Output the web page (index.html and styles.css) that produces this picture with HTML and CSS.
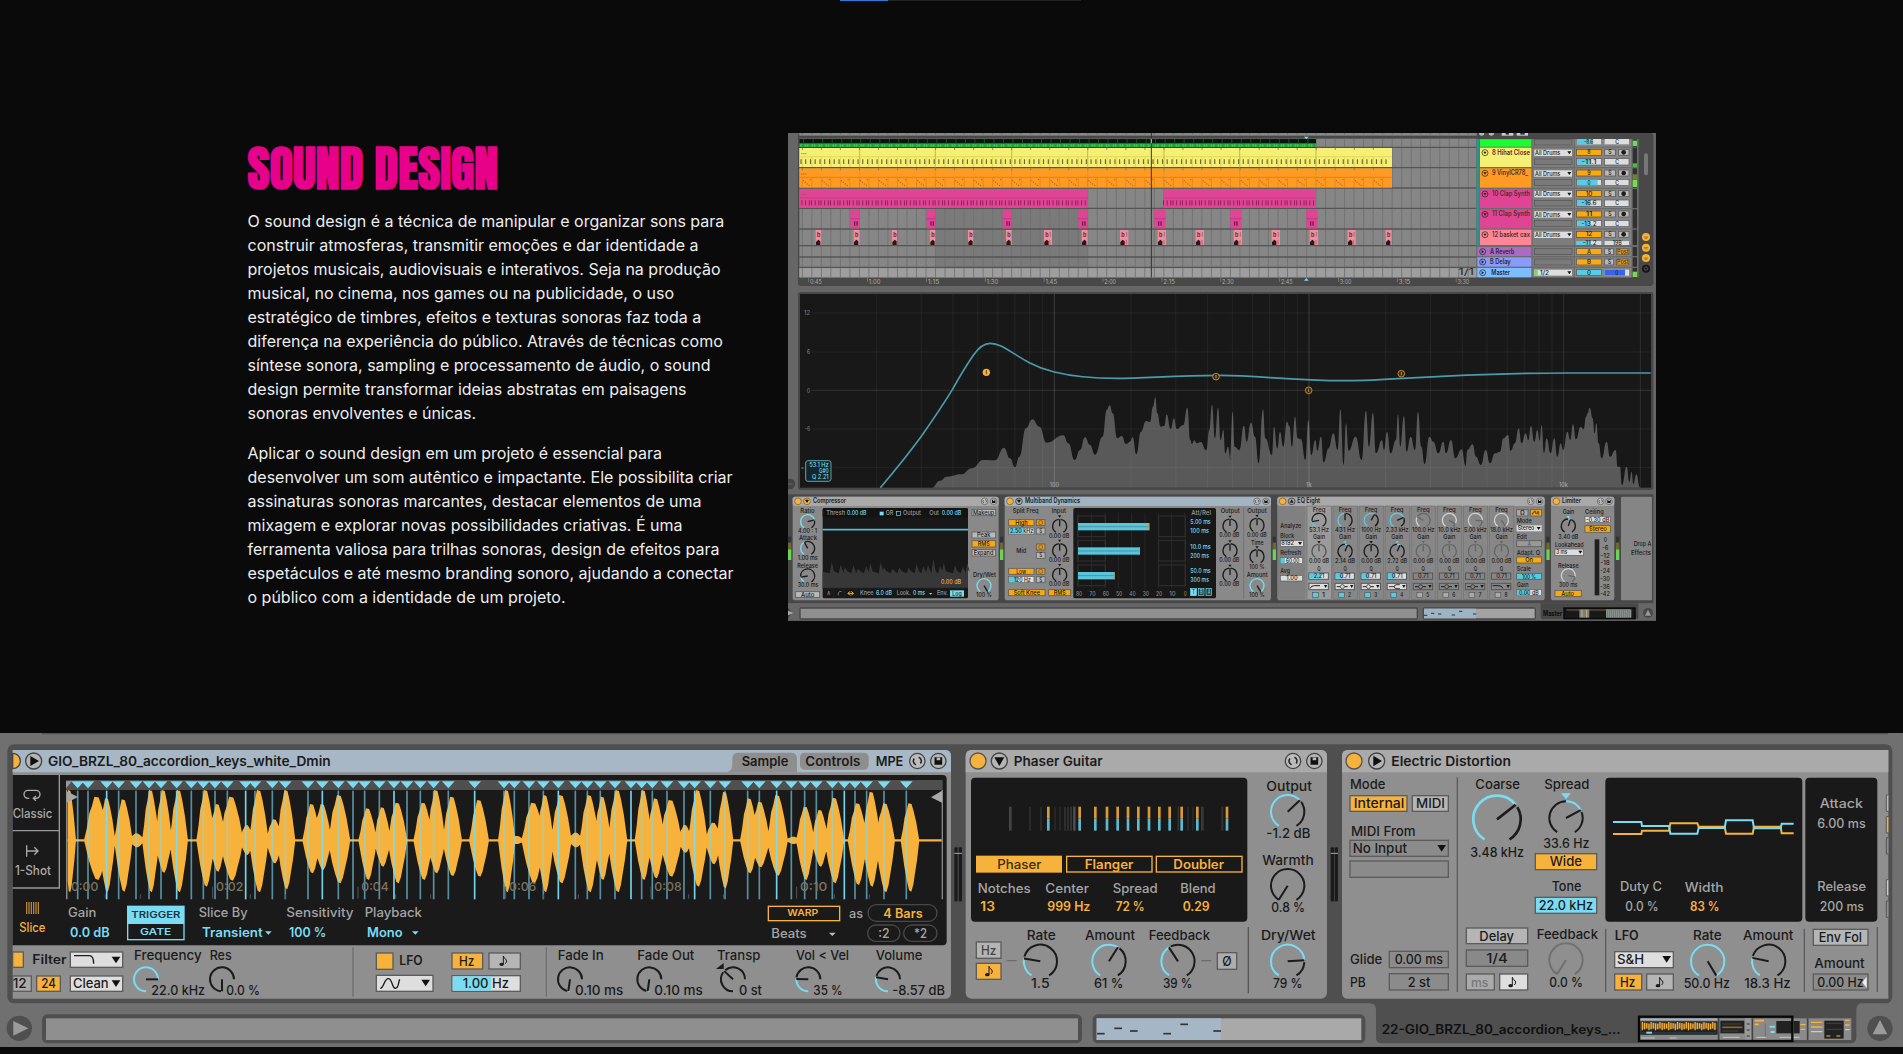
FILE: index.html
```html
<!DOCTYPE html>
<html lang="pt-BR">
<head>
<meta charset="utf-8">
<title>Sound Design</title>
<link rel="stylesheet" href="styles.css">
</head>
<body>
<div class="progress"><div class="progress-value"></div></div>
<main>
  <section class="intro">
    <div class="copy">
      <h2>SOUND DESIGN</h2>
      <p>O sound design é a técnica de manipular e organizar sons para construir atmosferas, transmitir emoções e dar identidade a projetos musicais, audiovisuais e interativos. Seja na produção musical, no cinema, nos games ou na publicidade, o uso estratégico de timbres, efeitos e texturas sonoras faz toda a diferença na experiência do público. Através de técnicas como síntese sonora, sampling e processamento de áudio, o sound design permite transformar ideias abstratas em paisagens sonoras envolventes e únicas.</p>
      <p>Aplicar o sound design em um projeto é essencial para desenvolver um som autêntico e impactante. Ele possibilita criar assinaturas sonoras marcantes, destacar elementos de uma mixagem e explorar novas possibilidades criativas. É uma ferramenta valiosa para trilhas sonoras, design de efeitos para espetáculos e até mesmo branding sonoro, ajudando a conectar o público com a identidade de um projeto.</p>
    </div>
    <svg class="session" id="session" viewBox="788 133 868 488" role="img"></svg>
  </section>
  <svg class="rack" id="rack" viewBox="0 733 1903 314" role="img"></svg>
</main>
<script src="script.js"></script>
</body>
</html>
```
FILE: styles.css
```css
* { box-sizing: border-box; }
body {
  margin: 0;
  background: #0a0a0a;
  color: #ededed;
  font-family: Inter, "Liberation Sans", sans-serif;
  font-size: 16px;
  line-height: 24px;
  overflow: hidden;
}
.progress {
  width: 241px;
  height: 1px;
  margin-left: 840px;
  background: #222;
}
.progress-value { width: 48px; height: 1px; background: #2f7bd9; }
.intro {
  display: grid;
  grid-template-columns: 492.5px 868px;
  gap: 48px;
  align-items: center;
  width: 1408.5px;
  margin: 20px 0 0 247.5px;
  padding: 112px 0;
}
.copy { display: flex; flex-direction: column; gap: 16px; }
.copy p { margin: 0; }
.copy h2 {
  margin: 0;
  font-family: Anton, Impact, sans-serif;
  font-size: 48px;
  font-weight: 700;
  line-height: 48px;
  color: #e6008a;
  white-space: nowrap;
}
.session { display: block; width: 868px; height: 488px; }
.rack { display: block; width: 1903px; height: 314px; }
svg text { font-family: Inter, "Liberation Sans", sans-serif; }
```
FILE: script.js
```js
const N = '#1b1b1b', CY = '#7adcf3', OR = '#f7b23b', GR = '#8f8f8f', BD = '#5c5c5c';
let out = '';
const esc = s => s.replace(/&/g, '&amp;').replace(/</g, '&lt;');
const add = s => { out += s; };

/* Panels are drawn in third-of-a-pixel units from a local origin. */
const at = (x, y, fn) => { add(`<g transform="translate(${x} ${y}) scale(.33333)">`); fn(); add('</g>'); };
const R = (x, y, x2, y2, f, r = 0, st, sw = 4) =>
  add(`<rect x="${x}" y="${y}" width="${x2 - x}" height="${y2 - y}" rx="${r}" fill="${f}"${st ? ` stroke="${st}" stroke-width="${sw}"` : ''}/>`);
const T = (x, x2, y, s, size = 39, f = N, w = 500) =>
  add(`<text x="${x}" y="${y}" textLength="${x2 - x}" lengthAdjust="spacingAndGlyphs" font-size="${size}" fill="${f}" font-weight="${w}">${esc(s)}</text>`);
const P = (d, f = 'none', st, sw = 4, o = 1) =>
  add(`<path d="${d}" fill="${f}"${st ? ` stroke="${st}" stroke-width="${sw}"` : ''} opacity="${o}"/>`);
const C = (x, y, r, f, st, sw = 4) =>
  add(`<circle cx="${x}" cy="${y}" r="${r}" fill="${f}"${st ? ` stroke="${st}" stroke-width="${sw}"` : ''}/>`);
const pt = (cx, cy, r, a) => [cx + r * Math.sin(a * Math.PI / 180), cy - r * Math.cos(a * Math.PI / 180)].map(v => v.toFixed(1)).join(' ');
const arc = (cx, cy, r, a, b, c, w) => {
  if (b - a > 1) P(`M${pt(cx, cy, r, a)}A${r} ${r} 0 ${b - a > 180 ? 1 : 0} 1 ${pt(cx, cy, r, b)}`, 'none', c, w);
};
function K(cx, cy, r, ang, o = {}) {
  const { s = -148, e = 148, z = s, dark = N, blue = CY, w = 6, g = 7 } = o;
  const lo = Math.min(z, ang), hi = Math.max(z, ang);
  arc(cx, cy, r, s, lo - (lo === ang ? g : 0), dark, w);
  arc(cx, cy, r, lo, hi, blue, w);
  arc(cx, cy, r, hi + (hi > s ? g : 0), e, dark, w);
  P(`M${cx} ${cy}L${pt(cx, cy, r, ang)}`, 'none', dark, w);
}
const down = (x, y, w = 13, h = 20, f = '#111') => P(`M${x - w} ${y}h${2 * w}l${-w} ${h}z`, f);
const note = (x, y, f = N) => {
  P(`M${x} ${y + 9}V${y - 15}q2 8 9 11q3 7 -3 12`, 'none', f, 3);
  add(`<ellipse cx="${x - 5}" cy="${y + 10}" rx="7" ry="5" fill="${f}"/>`);
};
const btn = (x, y, x2, y2, f, label, a, b, size = 39, col = N) => {
  R(x, y, x2, y2, f, 0, BD, size < 30 ? 2.5 : 4);
  if (label) T(a, b, (y + y2) / 2 + size * .36, label, size, col);
};
const swap = (x, y, r = 23) => {
  C(x, y, r, '#bcbcbc', '#444', r / 6);
  arc(x, y, r * .52, 20, 130, '#222', r / 5); arc(x, y, r * .52, 200, 310, '#222', r / 5);
};
const disk = (x, y, r = 23) => {
  C(x, y, r, '#b5b5b5', '#444', r / 6);
  R(x - r * .5, y - r * .5, x + r * .5, y + r * .5, '#111', 1);
  R(x - r * .22, y - r * .45, x + r * .25, y - r * .1, '#bbb');
};

/* ---------- Device rack ---------- */
at(0, 730, () => {
  R(0, 9, 5709, 951, '#707070');
  R(125, 9, 5664, 13, '#555');
  R(22, 43, 5677, 820, '#4f4f4f', 20);
  P('M4110 815H5590Q5569 820 5569 840V922Q5569 940 5550 940H4146Q4128 940 4128 922V838Q4128 820 4110 820z', '#4f4f4f');
  C(58, 895, 38, '#4f4f4f'); P('M40 873L85 895L40 917z', '#9b9b9b');
  C(5640, 895, 38, '#4f4f4f'); P('M5618 913L5640 870L5662 913z', '#9b9b9b');
  R(126, 853, 3246, 940, '#4f4f4f', 16); R(138, 865, 3234, 930, GR);
  R(3278, 853, 4096, 940, '#4f4f4f', 16); R(3290, 865, 4084, 930, '#a9a9a9'); R(3290, 865, 3663, 930, '#a5b7c6');
  [[3291, 911], [3343, 895], [3390, 903], [3490, 911], [3541, 883], [3640, 903]].forEach(([x, y]) => P(`M${x} ${y}h23`, 'none', '#333', 5));

  /* Simpler body */
  P('M38 60H2835Q2853 60 2853 78V788Q2853 806 2835 806H38z', GR);
  P('M38 60H2835Q2853 60 2853 78V127H38z', '#a7b7c5');
  P('M38 135H2828Q2840 135 2840 147V634Q2840 646 2828 646H38z', '#1a1a1a');
  P('M38 70A23 23 0 0 1 38 116z', OR, '#444', 4);
  C(101, 93, 24, '#b5b5b5', '#444'); P('M91 78L117 93L91 108z', '#111');
  T(144, 992, 107, 'GIO_BRZL_80_accordion_keys_white_Dmin', 39, N, 600);
  P('M38 302H178M38 474H178V135', 'none', '#999', 4);
  P('M88 205h-4a4 4 0 0 1 0 -24h24a10 10 0 0 1 0 24h-8m8 -7l-8 7l8 7', 'none', '#aaa', 4);
  P('M80 346v34M80 363h33m-10 -11l11 11l-11 11', 'none', '#aaa', 4);
  [80, 87, 94, 101, 108, 115].forEach(x => P(`M${x} 516V552`, 'none', OR, 3.5, .8));
  T(38, 157, 265, 'Classic', 38, '#aaa'); T(45, 153, 436, '1-Shot', 38, '#aaa'); T(58, 136, 606, 'Slice', 38, OR);
  R(198, 150, 2828, 180, '#4f4f4f');
  P('M200 180V508M2827 180V508', 'none', '#8a8a8a', 4);

  /* Waveform: [centre, top, bottom, half-width] */
  const w = [[208,180,487,20],[290,200,450,38],[320,205,485,26],[370,208,485,28],[410,310,352,24],[452,180,487,26],[490,180,428,26],[536,180,487,28],
    [617,180,470,28],[652,222,425,26],[694,200,452,36],[740,285,375,22],[776,180,487,30],[823,268,400,26],[858,180,478,28],[935,222,430,28],[967,222,420,28],
    [1017,195,460,34],[1103,235,450,28],[1147,232,410,26],[1192,218,460,30],[1270,218,450,30],[1308,180,430,28],[1356,200,438,30],[1437,210,440,30],
    [1520,180,487,26],[1550,318,342,24],[1600,218,460,36],[1635,195,487,26],[1683,195,460,32],[1727,308,352,24],[1768,195,487,30],[1807,200,450,26],[1852,180,487,30],
    [1930,180,450,26],[1967,205,445,28],[2012,210,440,34],[2055,285,368,22],[2093,180,470,30],[2140,278,403,26],[2174,185,475,26],[2248,205,430,28],[2280,215,412,30],
    [2332,195,437,32],[2380,320,342,24],[2416,230,450,28],[2460,240,410,26],[2503,203,460,30],[2573,220,465,30],[2614,185,470,28],[2655,220,487,30],[2730,220,485,28]];
  let d = '';
  w.forEach(([c, t, b, h]) => {
    const f = v => Math.max(203, c + h * v).toFixed(1), u = v => (331 - (331 - t) * v).toFixed(1), l = v => (331 + (b - 331) * v).toFixed(1);
    d += `M${f(-1)} 331L${f(-.76)} ${u(.3)}L${f(-.58)} ${u(.62)}L${f(-.38)} ${u(.78)}L${f(-.18)} ${u(1)}L${f(.16)} ${u(.98)}L${f(.38)} ${u(.8)}L${f(.66)} ${u(.5)}L${f(1)} 331`
      + `L${f(.76)} ${l(.38)}L${f(.52)} ${l(.66)}L${f(.36)} ${l(.86)}L${f(.14)} ${l(1)}L${f(-.1)} ${l(.97)}L${f(-.34)} ${l(.78)}L${f(-.6)} ${l(.52)}z`;
  });
  P(d, OR); P('M203 331H2825', 'none', OR, 7);
  const m = [233,264,320,356,408,447,483,530,574,610,645,682,737,765,817,856,924,967,1015,1059,1094,1138,1182,1221,1261,1301,1345,1424,
    1512,1543,1587,1630,1675,1726,1762,1801,1845,1893,1925,1957,2001,2052,2084,2131,2175,2243,2278,2330,2374,2414,2449,2497,2533,2565,2600,2652,2719];
  m.forEach((x, i) => { P(`M${x} 182V508`, 'none', CY, 5, i % 5 === 2 ? .95 : .62); P(`M${x - 19} 154h38l-10 11l-9 10l-9 -10z`, CY); });
  P('M200 184L234 201L200 218z', '#a6a6a6'); P('M198 175V154h18z', '#999'); P('M2826 182L2793 202L2826 218z', '#aaa');
  [213, 648, 1084, 1527, 1963, 2400].forEach((x, i) => {
    T(x, x + 82, 484, '0:' + String(i * 2).padStart(2, '0'), 36, '#7a7465');
    P(`M${x - 10} 470V506M${x + 103} 493V506M${x + 208} 493V506`, 'none', '#555', 3);
  });

  T(204, 289, 560, 'Gain', 38, '#a5a5a5'); T(210, 329, 620, '0.0 dB', 38, CY, 600);
  R(383, 529, 552, 629, '#1a1a1a', 0, CY, 4); R(383, 529, 552, 582, CY);
  T(394, 541, 563, 'TRIGGER', 27, '#173640', 600); T(420, 514, 614, 'GATE', 27, CY, 600);
  T(596, 743, 560, 'Slice By', 38, '#a5a5a5'); T(606, 788, 620, 'Transient', 38, CY, 600); down(805, 604, 10, 10, CY);
  T(859, 1061, 560, 'Sensitivity', 38, '#a5a5a5'); T(867, 979, 620, '100 %', 38, CY, 600);
  T(1094, 1266, 560, 'Playback', 38, '#a5a5a5'); T(1101, 1208, 620, 'Mono', 38, CY, 600); down(1246, 604, 10, 10, CY);

  R(38, 666, 70, 712, OR, 0, BD); T(97, 200, 703, 'Filter', 38, N, 600);
  btn(211, 666, 368, 712, '#dedede'); P('M222 677H268Q281 677 281 701', 'none', N, 4); down(348, 680);
  btn(38, 738, 94, 784, '#aaa', '12', 38, 80); btn(110, 738, 181, 784, OR, '24', 124, 168);
  btn(211, 738, 368, 784, '#dedede', 'Clean', 219, 326); down(348, 751);
  T(402, 605, 691, 'Frequency'); T(629, 695, 691, 'Res'); T(454, 615, 795, '22.0 kHz'); T(679, 780, 795, '0.0 %');
  K(438, 748, 36, 90, { s: -180, e: 90 }); K(666, 748, 36, -180, { s: -175, e: 90 });
  P('M1059 652V800M1639 652V800', 'none', '#707070', 4);
  R(1129, 669, 1179, 718, OR, 0, BD); T(1198, 1268, 706, 'LFO', 38, N, 600);
  btn(1129, 736, 1299, 784, '#dedede'); P('M1141 775C1152 775 1152 746 1165 746S1175 775 1186 775S1195 755 1199 748', 'none', N, 4); down(1277, 749);
  btn(1356, 669, 1448, 717, OR, 'Hz', 1377, 1423);
  btn(1467, 669, 1561, 717, '#b5b5b5'); note(1510, 693);
  R(1356, 737, 1561, 784, '#dedede', 0, BD); R(1358, 739, 1474, 782, CY); T(1388, 1527, 774, '1.00 Hz');
});
at(480, 730, () => {
  P('M740 127Q757 122 757 105V86Q757 68 775 68H933Q951 68 951 86V127z', '#8e8e8e'); R(960, 68, 1166, 119, '#8e8e8e', 14);
  T(785, 925, 107, 'Sample', 39, N, 600); T(976, 1141, 107, 'Controls', 39, N, 600); T(1187, 1270, 107, 'MPE', 39, N, 600);
  swap(1312, 93); disk(1375, 93);
  R(865, 529, 1079, 572, 'none', 0, OR, 4); T(922, 1015, 559, 'WARP', 26, OR, 600);
  T(1107, 1149, 563, 'as', 38, '#a5a5a5'); R(1164, 524, 1371, 574, '#1a1a1a', 25, '#484848'); T(1210, 1328, 563, '4 Bars', 38, OR, 600);
  T(874, 980, 623, 'Beats', 38, '#a5a5a5'); down(1057, 608, 10, 10, '#bbb');
  R(1163, 585, 1260, 634, '#1a1a1a', 25, '#484848'); R(1271, 585, 1371, 634, '#1a1a1a', 25, '#484848');
  T(1195, 1229, 623, ':2', 38, '#aaa'); T(1302, 1341, 623, '*2', 38, '#aaa');
  [['Fade In', 233, 371, '0.10 ms', 285, 430, 270, -172], ['Fade Out', 472, 643, '0.10 ms', 523, 668, 508, -172], ['Transp', 711, 841, '0 st', 777, 846, 759, -47],
   ['Vol < Vel', 948, 1107, '35 %', 1000, 1088, 985, -88], ['Volume', 1187, 1327, '-8.57 dB', 1237, 1395, 1224, -80]].forEach(([l, a, b, v, c, e, x, g], i) => {
    T(a, b, 691, l); T(c, e, 795, v); K(x, 748, 36, g, { s: -180, e: 90, z: i === 2 ? -47 : -180 });
  });
  P('M708 717L731 699V717z', N);
});
at(950, 730, () => {
  /* Level meters between devices */
  [[13, 36], [1142, 1164]].forEach(([a, b]) => {
    R(a, 352, a + 10, 514, N); R(b - 10, 352, b, 514, N); P(`M${a} 370H${b}`, 'none', '#aaa', 3);
  });
  R(47, 60, 1131, 806, GR, 18); P('M47 127V78Q47 60 65 60H1113Q1131 60 1131 78V127z', '#aaa');
  C(84, 93, 24, OR, '#555'); C(148, 93, 24, '#b5b5b5', '#444'); down(148, 82, 15, 26);
  T(191, 458, 107, 'Phaser Guitar', 39, N, 600); swap(1029, 93); disk(1093, 93);
  R(63, 143, 892, 575, '#191919', 12);
  [[181, '#444', 8], [240, '#333', 4], [273, '#333', 4], [315, '#2d2d2d', 4], [330, '#2d2d2d', 4], [345, '#333', 5], [354, '#333', 5], [363, '#393939', 5], [373, '#505050', 7],
   [685, '#333', 5], [714, '#333', 4], [729, '#2d2d2d', 4], [757, '#383838', 8], [817, '#333', 6]].forEach(([x, c, s]) => P(`M${x} 230V302`, 'none', c, s));
  [295, 389, 436, 471, 503, 534, 565, 597, 628, 659, 695, 742, 831].forEach(x => { P(`M${x} 230V266`, 'none', '#dc9b32', 8); P(`M${x} 266V302`, 'none', '#60b9cf', 8); });
  R(78, 377, 336, 428, OR); T(142, 274, 417, 'Phaser', 38, '#3c2c10');
  R(350, 379, 606, 426, 'none', 0, OR, 4); T(404, 550, 417, 'Flanger', 38, OR, 600);
  R(619, 379, 876, 426, 'none', 0, OR, 4); T(670, 822, 417, 'Doubler', 38, OR, 600);
  [['Notches', 83, 242, '13', 91, 135], ['Center', 286, 417, '999 Hz', 292, 421], ['Spread', 488, 623, '72 %', 497, 584], ['Blend', 691, 797, '0.29', 698, 779]].forEach(([l, a, b, v, c, e]) => {
    T(a, b, 488, l, 38, '#a5a5a5'); T(c, e, 543, v, 38, OR, 600);
  });
  T(949, 1086, 182, 'Output'); K(1013, 245, 50, 47); T(949, 1081, 325, '-1.2 dB');
  T(937, 1091, 405, 'Warmth'); K(1013, 467, 50, -148); T(964, 1065, 547, '0.8 %');
  T(933, 1097, 631, 'Dry/Wet'); K(1013, 694, 50, 86); T(969, 1057, 774, '79 %');
  T(230, 317, 631, 'Rate'); K(271, 694, 50, -80); T(243, 299, 774, '1.5');
  T(405, 555, 631, 'Amount'); K(477, 694, 50, 32); T(432, 520, 774, '61 %');
  T(596, 780, 631, 'Feedback'); K(684, 694, 50, -33); T(639, 727, 774, '39 %');
  P('M895 591V790', 'none', '#555', 4); P('M170 692h30M754 692h30', 'none', '#6c6c6c', 4);
  btn(79, 636, 153, 685, '#b5b5b5', 'Hz', 93, 139, 38, '#444'); btn(79, 700, 153, 748, OR); note(117, 724);
  btn(802, 668, 860, 718, '#aeaeae', 'Ø', 817, 845);
  /* Wavetable distortion, left part */
  P('M1176 806V78Q1176 60 1194 60H2815V806H1194Q1176 806 1176 788z', GR);
  P('M1176 127V78Q1176 60 1194 60H2815V127z', '#aaa');
  C(1212, 93, 24, OR, '#555'); C(1280, 93, 24, '#b5b5b5', '#444'); P('M1270 77L1296 93L1270 109z', '#111');
  T(1324, 1683, 107, 'Electric Distortion', 39, N, 600);
  T(1200, 1306, 178, 'Mode'); btn(1200, 197, 1371, 244, OR, 'Internal', 1211, 1363);
  btn(1387, 197, 1495, 244, '#b5b5b5', 'MIDI', 1398, 1485);
  T(1203, 1397, 317, 'MIDI From'); btn(1200, 331, 1495, 379, '#8b8b8b', 'No Input', 1208, 1371); down(1475, 345);
  btn(1200, 393, 1495, 442, '#8b8b8b');
  T(1200, 1297, 703, 'Glide'); btn(1318, 664, 1495, 713, '#8b8b8b', '0.00 ms', 1334, 1479);
  T(1200, 1247, 770, 'PB'); btn(1318, 731, 1495, 780, '#8b8b8b', '2 st', 1373, 1441);
  T(1295, 2012, 912, '22-GIO_BRZL_80_accordion_keys_...', 38, '#111', 600);
});
at(1423, 730, () => {
  P('M103 142V786M548 596V786M1144 596V786M1363 591V786', 'none', '#5c5c5c', 4);
  T(157, 291, 178, 'Coarse'); K(222, 268, 71, 52, { w: 8 }); T(142, 303, 381, '3.48 kHz');
  T(364, 499, 178, 'Spread'); K(429, 264, 50, 62, { z: 0 }); down(429, 190, 15, 17, CY); T(361, 499, 353, '33.6 Hz');
  btn(337, 371, 521, 419, OR, 'Wide', 380, 477); T(386, 475, 484, 'Tone'); btn(337, 502, 521, 550, CY, '22.0 kHz', 347, 510);
  btn(130, 594, 314, 641, '#b5b5b5', 'Delay', 169, 273); btn(130, 660, 314, 709, '#898989', '1/4', 190, 254);
  btn(130, 732, 214, 780, '#aaa', 'ms', 144, 196, 38, '#777'); btn(230, 732, 314, 780, '#dedede'); note(268, 757);
  T(341, 525, 627, 'Feedback'); K(429, 690, 50, -148, { dark: '#707070' }); T(379, 480, 770, '0.0 %');
  R(547, 143, 1138, 575, '#191919', 12); R(1147, 143, 1363, 575, '#191919', 12);
  P('M570 312H655L657 302H738L742 280H823L827 290H905L909 311H989L993 290H1073L1076 310H1112', 'none', OR, 6);
  P('M570 276H655L657 288H738L742 311H823L827 294H905L909 271H989L993 295H1073L1076 281H1112', 'none', CY, 6);
  T(591, 717, 484, 'Duty C', 38, '#a5a5a5'); T(607, 707, 543, '0.0 %', 38, '#a5a5a5');
  T(785, 902, 487, 'Width', 38, '#a5a5a5'); T(801, 889, 543, '83 %', 38, OR, 600);
  T(1190, 1320, 233, 'Attack', 38, '#a5a5a5'); T(1183, 1328, 293, '6.00 ms', 38, '#a5a5a5');
  T(1183, 1329, 484, 'Release', 38, '#a5a5a5'); T(1190, 1323, 543, '200 ms', 38, '#a5a5a5');
  T(575, 647, 630, 'LFO', 38, N, 600); btn(575, 665, 751, 713, '#dedede', 'S&H', 582, 663); down(731, 678);
  btn(575, 732, 656, 780, OR, 'Hz', 591, 637); btn(671, 732, 751, 780, '#b5b5b5'); note(710, 757);
  T(810, 896, 631, 'Rate'); K(854, 694, 50, 149, { e: 149 }); T(782, 921, 774, '50.0 Hz');
  T(960, 1111, 631, 'Amount'); K(1037, 694, 50, -78); T(964, 1103, 774, '18.3 Hz');
  btn(1171, 598, 1335, 646, '#b5b5b5', 'Env Fol', 1187, 1317); T(1174, 1325, 714, 'Amount');
  btn(1171, 732, 1335, 780, '#8b8b8b', '0.00 Hz', 1183, 1322); P('M1331 740V774L1318 757z', '#eee');
  [[195, '#bbb'], [260, OR], [323, GR], [449, '#ccc'], [513, GR]].forEach(([y, c]) => { R(1389, y, 1396, y + 48, c); P(`M1396 ${y}H1390V${y + 49}H1396`, 'none', '#555', 3); });
  /* Chain overview */
  R(645, 865, 1285, 930, '#8a8a8a');
  R(652, 874, 884, 914, '#222'); P('M656 888H880', 'none', OR, 19, .35);
  for (let i = 0; i < 34; i++) P(`M${658 + i * 6.6} ${876 + i % 4 * 2}V${901 - i % 3 * 3}`, 'none', OR, 3.5);
  P('M652 910h228', 'none', '#28343a', 8); P('M670 908h17', 'none', CY, 6); P('M652 868h230', 'none', '#9db7c9', 5);
  R(892, 872, 964, 910, '#222'); P('M898 892h60', 'none', '#8e682b', 5); P('M898 882h56M898 903h48', 'none', '#444', 3);
  R(966, 865, 990, 930, '#999'); P('M971 882h9M971 900h9M971 918h9', 'none', '#555', 4);
  P('M995 872h28M995 883h12', 'none', OR, 5); P('M1040 890h16M1043 906h12', 'none', CY, 6); P('M1027 880v46', 'none', '#666', 2);
  R(1060, 873, 1110, 910, '#222'); R(1112, 873, 1130, 910, '#222'); P('M1132 884h16M1132 898h14', 'none', OR, 4);
  R(1204, 872, 1262, 926, '#222'); P('M1210 880h46M1210 898h46', 'none', '#444', 3); P('M1210 918h12M1240 918h12', 'none', OR, 3);
  [877, 891, 905].forEach(y => P(`M1164 ${y}h34M1266 ${y - 6}h14`, 'none', y < 900 ? OR : '#ccc', 4));
  P('M988 865v65M1154 865v65M887 865v65', 'none', '#444', 5);
  P('M655 924h40M740 924h20M900 922h50M1000 922h30M1070 922h60', 'none', '#c5c5c5', 3);
  R(648, 860, 1108, 933, 'none', 0, '#080808', 7);
});
document.getElementById('rack').innerHTML = out;

/* ---------- Session view ---------- */
out = '';
at(780, 120, () => {
  R(24, 39, 2628, 1502, '#666');
  R(54, 39, 2620, 498, '#484848', 10);
  R(58, 56, 2090, 472, '#868686'); R(58, 39, 2090, 47, '#868686');
  R(466, 204, 923, 472, '#7a7a7a'); R(58, 445, 2090, 472, '#9e9e9e');
  for (let x = 67; x < 2090; x += 28.54) P(`M${x} 39V47M${x} 56V472`, 'none', '#707070', 2.5);
  [82, 143, 204, 265, 327, 377, 411, 442].forEach(y => P(`M58 ${y}H2090`, 'none', '#555', 4));
  R(58, 57, 1608, 82, '#08190c'); R(58, 70, 1608, 81, '#2fa947');
  for (let x = 62; x < 1606; x += 7) P(`M${x} 73V80`, 'none', x % 3 ? '#46cf5e' : '#1f8a37', 2.5);
  for (let x = 71; x < 1606; x += 28.54) P(`M${x} 57V71`, 'none', '#1c5a29', 2.5);
  R(58, 84, 1836, 141, '#f5ef73'); R(58, 145, 1836, 203, '#ff9b22');
  R(58, 207, 923, 264, '#df4594'); R(1152, 207, 1608, 264, '#df4594');
  P('M58 110H1836', 'none', '#d9ce51', 2); P('M58 172H1836', 'none', '#cf7415', 2); P('M58 234H923M1152 234H1608', 'none', '#bf3580', 2);
  [239, 466, 695, 923, 1152, 1379, 1608].forEach(x => P(`M${x} 84V203`, 'none', '#b49b35', 2));
  for (let x = 67; x < 1836; x += 28.54) {
    P(`M${x} 112V141`, 'none', '#d5c94c', 2); P(`M${x} 174V203`, 'none', '#de7f18', 2);
    P(`M${x - 4} 118V132M${x + 10} 118V132`, 'none', '#6d6a3a', 3.5);
    if (x < 900 || (x > 1150 && x < 1600)) P(`M${x - 1} 241V256M${x + 10} 241V256M${x + 21} 241V256`, 'none', '#8d2258', 3);
  }
  for (let x = 67; x < 1820; x += 57.1) {
    P(`M${x} 83V90M${x} 145V151`, 'none', '#777', 2.5);
    [[2, 182], [7, 187], [13, 192], [22, 179], [19, 196]].forEach(([a, b]) => P(`M${x + a} ${b}h3`, 'none', '#a45a1a', 3));
  }
  [[64, 101], [64, 162], [64, 223]].forEach(([x, y]) => P(`M${x} ${y}h3m3 0h3m3 0h3`, 'none', '#8b642b', 3));
  [[211, 239], [440, 466], [668, 695], [895, 923], [1123, 1157], [1351, 1385], [1579, 1613]].forEach(([a, b]) => {
    R(a, 268, b, 325, '#df4594'); P(`M${a} 296H${b}`, 'none', '#b5327a', 2); R(a + 11, 304, a + 15, 317, '#7b164b'); R(a + 18, 304, a + 22, 317, '#7b164b');
  });
  [[107,124],[221,239],[336,351],[450,466],[564,580],[678,695],[792,816],[905,923],[1020,1045],[1133,1158],[1247,1272],[1361,1386],[1475,1500],[1589,1614],[1703,1727],[1817,1835]].forEach(([a, b]) => {
    R(a, 330, b, 375, '#f28d9c'); T(a + 4, a + 14, 350, 'b', 18, '#51202b', 600); P(`M${a + 1} 375v-9l7 -7l6 5v11z`, '#26191c'); if (b - a > 20) P(`M${b - 5} 336v14M${b - 6} 360v14`, 'none', '#9b4d5c', 2);
  });
  P('M1114 39V472', 'none', '#333', 3); P('M1114 56V70', 'none', '#aaa', 4);
  P('M1572 50h14l-7 8z', CY); P('M1572 482h14l-7 -8z', CY);
  ['0:45', '1:00', '1:15', '1:30', '1:45', '2:00', '2:15', '2:30', '2:45', '3:00', '3:15', '3:30'].forEach((s, i) => {
    const x = 90 + i * 176.6; T(x, x + 35, 491, s, 18, '#aaa', 400); P(`M${x - 4} 474V486`, 'none', '#888', 2);
  });
  T(2035, 2082, 466, '1/1', 26, '#333');
});
at(1220, 120, () => {
  R(770, 57, 1256, 472, '#6b6b6b'); R(770, 57, 778, 377, '#27968f');
  P('M777 39h16a8 8 0 0 1 -16 0M806 39h16a8 8 0 0 1 -16 0', '#b5b5b5'); R(845, 39, 880, 47, '#ccc'); R(890, 39, 924, 47, '#ccc'); R(857, 39, 867, 44, '#333'); R(901, 39, 914, 44, '#333');
  const rows = [[58, 80, '#1bff32', ''], [83, 141, '#f5ef73', '8 Hihat Close', '8', '-11.1'], [145, 203, '#ff9b22', '9 VinylCR78_', '9', '0'], [207, 264, '#df4594', '10 Clap Synth', '10', '-16.6'],
    [268, 325, '#df4594', '11 Clap Synth', '11', '-13.2'], [329, 375, '#ff8697', '12 basket cax', '12', '-11.2']];
  rows.forEach(([a, b, c, name, n, v], i) => {
    R(780, a, 934, b, c); R(938, a, 1062, b, '#7d7d7d'); R(1065, a, 1234, b, '#858585'); R(1238, a, 1251, b, '#303030');
    if (!i) {
      R(943, 58, 1056, 75, '#777', 0, '#555', 2); R(1071, 57, 1143, 73, '#ddd'); R(1071, 57, 1118, 73, '#57cde5'); T(1092, 1120, 71, '-8.6', 17);
      R(1154, 57, 1227, 73, '#ddd'); T(1186, 1197, 71, 'C', 18); R(1238, 62, 1251, 78, '#69db55'); return;
    }
    C(795, a + 15, 9, 'none', N, 2); down(795, a + 12, 5, 7, N);
    T(816, name.length > 12 ? 930 : 924, a + 21, name, 21, '#5b2a2a', 600);
    R(943, a + 6, 1056, a + 25, '#ddd'); T(945, 1021, a + 22, 'All Drums', 19); down(1048, a + 11, 6, 9);
    if (i < 5) R(943, a + 34, 1056, a + 51, '#7a7a7a', 0, '#555', 2);
    R(1070, a + 5, 1144, a + 23, '#fca90f', 0, '#5b4b25', 2); T(1107 - n.length * 5, 1107 + n.length * 5, a + 20, n, 18);
    btn(1154, a + 5, 1186, a + 23, '#bbb', 'S', 1165, 1175, 18); btn(1196, a + 5, 1227, a + 23, '#bbb', '', 0, 0, 18); C(1211, a + 14, 7, N);
    if (i < 5) {
      R(1070, a + 33, 1144, a + 52, '#ddd', 0, '#555', 2); R(1071, a + 34, v === '0' ? 1133 : 1111, a + 51, '#57cde5'); T(1107 - v.length * 4.5, 1107 + v.length * 4.5, a + 49, v, 18);
      R(1154, a + 33, 1227, a + 52, '#ddd', 0, '#555', 2); T(1186, 1197, a + 49, 'C', 18);
    } else { R(1070, 363, 1144, 375, '#ddd'); R(1070, 363, 1111, 375, '#57cde5'); T(1088, 1130, 375, v, 17); R(1154, 363, 1227, 375, '#ddd'); T(1178, 1205, 375, '19B', 17); }
  });
  R(1238, 130, 1251, 141, '#4bbb41'); R(1238, 163, 1251, 178, '#6d8334'); R(1238, 179, 1251, 201, '#75dd50');
  [[381, 408, '#ab6bc3', 'A Reverb', 883, 'A'], [412, 440, '#8b9bfb', 'B Delay', 872, 'B'], [444, 472, '#7dbeff', 'Master', 870, '0']].forEach(([a, b, c, l, e, n], i) => {
    R(772, a, 934, b, c); R(938, a, 1062, b, '#7d7d7d'); R(1065, a, 1234, b, '#858585'); R(1238, a, 1251, b, '#303030');
    C(788, a + 14, 9, 'none', N, 2); P(`M785 ${a + 9}l7 5l-7 5z`, N); T(i === 2 ? 814 : 810, e, a + 21, l, 21, '#29293f', 600);
    R(1070, a + 5, 1144, a + 23, i < 2 ? '#fca90f' : '#57cde5', 0, '#555', 2); T(1101, 1113, a + 20, n, 18);
    if (i < 2) { R(943, a + 5, 1056, a + 23, '#7a7a7a', 0, '#555', 2); btn(1154, a + 5, 1181, a + 23, '#bbb', 'S', 1163, 1173, 18); btn(1189, a + 5, 1227, a + 23, '#e8991c', 'Post', 1191, 1226, 18, '#4a2f08'); }
    else { R(943, a + 5, 1056, a + 23, '#ddd'); R(943, a + 5, 953, a + 22, '#72d967'); T(960, 987, a + 21, '1/2', 19); down(1048, a + 10, 6, 9); R(1154, a + 5, 1227, a + 23, '#ddd'); R(1154, a + 5, 1215, a + 23, '#3565ee'); T(1186, 1195, a + 20, '0', 18); R(1238, 455, 1251, 471, '#72d955'); }
  });
  R(1272, 100, 1284, 166, '#777', 6);
  [351, 383, 414].forEach(y => { C(1278, y, 12, OR); P(`M1272 ${y}h12m-10 4h8`, 'none', '#7b541d', 2); });
  C(1278, 446, 12, '#161616'); C(1278, 446, 5, 'none', '#555', 3);
});
/* EQ analyser */
at(780, 280, () => {
  R(54, 36, 2620, 630, '#474747', 8); R(60, 42, 2613, 623, '#181818');
  const sp = [[455,623],[480,602],[500,590],[545,583],[575,565],[610,540],[645,541],[672,503],[690,535],[705,562],[718,530],[738,445],[757,418],[778,440],[800,488],[850,466],[865,490],[884,540],[900,510],[915,472],[930,495],[945,524],[968,470],[980,390],[989,376],[998,400],[1012,475],[1025,468],[1038,492],[1050,485],[1058,472],[1069,523],[1083,455],[1098,423],[1110,426],[1119,380],[1126,352],[1132,400],[1142,440],[1153,438],[1160,403],[1172,447],[1182,415],[1190,447],[1210,435],[1222,383],[1231,480],[1236,492],[1243,481],[1250,490],[1262,486],[1279,511],[1288,450],[1296,374],[1305,474],[1314,383],[1322,480],[1330,450],[1336,520],[1344,500],[1352,540]];
  let p = `M${sp[0]}`;
  for (let i = 1; i < sp.length; i++) { const [x, y] = sp[i], [a, b] = sp[i - 1], m = (a + x) / 2; p += `C${m} ${b} ${m} ${y} ${x} ${y}`; }
  /* Dense high-frequency peaks, offset into the right half of the analyser */
  const hi = [[30,530],[38,395],[44,500],[58,510],[72,437],[80,485],[93,428],[105,470],[116,550],[129,388],[136,475],[156,525],[162,440],[172,505],[180,455],[190,500],[201,425],[208,438],[216,500],[225,410],[233,475],[243,478],[256,540],[265,420],[274,525],[286,480],[292,512],[303,470],[311,547],[326,505],[340,460],[353,510],[361,388],[371,555],[378,430],[386,512],[407,470],[425,540],[438,392],[447,500],[459,398],[468,520],[486,480],[492,510],[501,455],[512,520],[528,480],[534,403],[541,500],[552,408],[560,515],[572,470],[585,510],[594,395],[604,500],[614,552],[628,470],[640,485],[655,520],[670,485],[678,520],[693,480],[706,535],[725,508],[737,557],[742,510],[758,493],[768,530],[783,555],[797,510],[810,550],[825,520],[840,515],[850,475],[864,465],[872,512],[885,490],[896,445],[905,490],[917,460],[925,480],[933,438],[943,485],[952,450],[959,482],[965,435],[972,520],[980,475],[992,520],[1003,475],[1012,530],[1022,490],[1030,510],[1042,455],[1051,480],[1059,432],[1068,478],[1082,440],[1091,448],[1098,410],[1103,400],[1109,383],[1118,415],[1124,460],[1129,430],[1136,490],[1145,535],[1160,485],[1170,530],[1187,510],[1193,560],[1200,560],[1206,615],[1220,560],[1228,605],[1235,575],[1240,612],[1249,583],[1260,623]];
  let pd = [1352, 540];
  hi.forEach(([x, y]) => { x += 1320; const m = (pd[0] + x) / 2; p += `C${m} ${pd[1]} ${m} ${y} ${x} ${y}`; pd = [x, y]; });
  P(p + 'z', '#595959');
  for (let y of [99, 216, 331, 447, 563]) P(`M${y === 563 ? 160 : 96} ${y}H2613`, 'none', '#fff', 3, y === 331 ? .12 : .06);
  for (let dec = 0; dec < 3; dec++) for (let k = 1; k < 10; k++) {
    const x = 823 + (dec - 1) * 764 + 764 * Math.log10(k);
    if (x > 65 && x < 2600) P(`M${x} 42V623`, 'none', '#fff', 3, k === 1 ? .16 : .06);
  }
  P('M2351 42V623M2581 42V623', 'none', '#fff', 3, .1);
  T(72, 90, 106, '12', 19, '#777'); T(80, 90, 223, '6', 19, '#777'); T(80, 90, 338, '0', 19, '#777'); T(74, 90, 453, '-6', 19, '#777');
  P('M301 623C345 571 385 522 423 470C460 418 490 373 517 329C540 288 560 255 580 226C594 205 608 190 631 190C664 190 690 217 748 248C775 262 795 269 823 276C880 290 940 295 1010 295C1100 295 1180 286 1320 286C1440 286 1520 302 1700 302C1860 302 1960 280 2360 279H2612', 'none', '#4b9bab', 5);
  C(619, 277, 11, OR); P('M619 270v13', 'none', '#6c4312', 3);
  [[1308, 290], [1586, 331], [1864, 281]].forEach(([x, y]) => { C(x, y, 10, '#382c19', '#c18a36', 3); P(`M${x} ${y - 5}v10`, 'none', '#c18a36', 3); });
  R(77, 542, 153, 604, '#14282c', 7, '#58a5b2', 3);
  T(88, 146, 562, '53.1 Hz', 17, CY); T(117, 146, 579, 'G#0', 17, CY); T(96, 146, 596, 'Q 2.21', 17, CY); P('M64 564h7', 'none', '#58a5b2', 3);
  T(809, 837, 620, '100', 18, '#a0a0a0'); T(1578, 1595, 620, '1k', 18, '#a0a0a0'); T(2337, 2364, 620, '10k', 18, '#a0a0a0');
  P('M24 597A16 16 0 1 1 24 627z', '#454545'); P('M24 612h14', 'none', '#777', 2);
});
const S = 20, k2 = { w: 4 };
const meter = x => { R(x, 170, x + 10, 240, '#333'); R(x, 188, x + 10, 208, '#6c6835'); R(x, 208, x + 10, 240, '#69d555'); };
at(780, 480, () => {
  R(24, 43, 2620, 370, '#484848'); meter(24); meter(660);
  R(38, 50, 656, 361, '#898989', 8); R(38, 50, 656, 78, '#a9a9a9', 8);
  C(54, 64, 10, OR, '#765321', 2); C(81, 64, 10, OR, '#765321', 2); down(81, 59, 6, 10); T(99, 198, 70, 'Compressor', 21, N, 600); swap(614, 64, 10); disk(641, 64, 10);
  T(61, 104, 99, 'Ratio', S); K(83, 125, 21, 76, k2); T(54, 111, 160, '4.00 : 1', S);
  T(57, 111, 180, 'Attack', S); K(83, 205, 21, -28, k2); T(53, 113, 239, '1.00 ms', S);
  T(52, 114, 263, 'Release', S); K(83, 288, 21, -100, k2); T(53, 115, 322, '30.0 ms', S); btn(47, 335, 119, 352, '#b9b9b9', 'Auto', 63, 103, S);
  R(128, 84, 564, 355, '#181818', 5); R(128, 84, 564, 113, '#131313', 5);
  T(139, 195, 106, 'Thresh', S, '#999'); T(201, 259, 106, '0.00 dB', S, CY); R(299, 95, 311, 106, CY); T(317, 340, 106, 'GR', S, '#999');
  R(350, 95, 361, 106, 'none', 0, CY, 2); T(369, 423, 106, 'Output', S, '#999'); T(448, 477, 106, 'Out', S, '#999'); T(485, 544, 106, '0.00 dB', S, CY);
  P('M128 149H564', 'none', '#59bace', 5);
  let c = 'M128 324V275';
  [[155,246],[182,254],[195,262],[220,256],[234,266],[258,258],[271,250],[302,246],[312,262],[338,266],[358,262],[386,262],[410,252],[430,258],[444,254],[460,236],[480,258],[491,248],[525,256],[548,260],[562,250]].forEach(([x, y]) => { c += `L${x - 6} 280L${x} ${y}L${x + 7} 274`; });
  P(c + 'L564 270V324z', '#373737'); P('M128 324H564M160 324V355M193 324V355M228 324V355', 'none', '#292929', 2);
  T(483, 543, 311, '0.00 dB', S, OR); T(142, 151, 346, 'ʌ', 18, '#999'); P('M175 346v-7q0 -5 10 -5', 'none', '#999', 2); P('M204 340h16m-6 -6l6 6l-6 6m-4 -12l-6 6l6 6', 'none', OR, 3);
  T(240, 280, 346, 'Knee', S, '#999'); T(288, 336, 346, '6.0 dB', S, CY); T(350, 392, 346, 'Look.', S, '#999'); T(399, 435, 346, '0 ms', S, CY); down(452, 339, 5, 5, CY); T(471, 504, 346, 'Env.', S, '#999'); R(510, 331, 552, 350, CY); T(517, 545, 347, 'Log', S);
  [['Makeup', 88, 107, '#b9b9b9', 579, 643], ['Peak', 156, 174, '#b9b9b9', 591, 631], ['RMS', 182, 201, '#fca90f', 593, 629], ['Expand', 209, 228, '#b9b9b9', 581, 640]].forEach(([l, a, b, f, x, y]) => btn(576, a, 647, b, f, l, x, y, S));
  T(579, 648, 291, 'Dry/Wet', S); K(612, 317, 21, 148, k2); T(588, 636, 351, '100 %', S);
  /* Multiband Dynamics spans into the right half */
  R(674, 50, 1473, 361, '#898989', 8); R(674, 50, 1473, 78, '#a0b4c2', 8);
  C(690, 64, 10, OR, '#765321', 2); C(717, 64, 10, '#aaa', N, 2); down(717, 59, 6, 10); T(735, 900, 70, 'Multiband Dynamics', 21, N, 600);
  T(698, 776, 100, 'Split Freq', S); T(815, 858, 100, 'Input', S);
  [['High', 119, '2.50 kHz', 730], ['Low', 265, '120 Hz', 714]].forEach(([l, y, v, q], i) => {
    btn(686, y, 762, y + 18, '#fca90f', l, i ? 709 : 706, i ? 738 : 743, S); R(686, y + 25, 762, y + 43, '#ddd', 0, BD, 2); R(687, y + 26, q, y + 42, '#53cde5'); T(i ? 702 : 690, i ? 752 : 760, y + 41, v, 19);
  });
  T(709, 739, 219, 'Mid', S);
  [119, 192, 265].forEach(y => { btn(769, y, 795, y + 18, '#e5961a', '', 0, 0, S); C(782, y + 9, 6, 'none', '#7b5110', 2); btn(769, y + 25, 795, y + 43, '#b9b9b9', 'S', 778, 787, 18); K(839, y + 20, 21, 0, { w: 4, z: 0 }); down(839, y - 13, 5, 7, N); T(807, 868, y + 54, '0.00 dB', S); });
  btn(686, 329, 795, 347, '#fca90f', 'Soft Knee', 701, 780, S); btn(806, 329, 872, 347, '#fca90f', 'RMS', 821, 857, S);
  R(880, 84, 1308, 355, '#181818', 5);
  for (let i = 0; i < 9; i++) P(`M${895 + i * 40} 98V326`, 'none', '#303030', 2);
  [[1108, 140], [1080, 213], [1004, 287]].forEach(([e, y]) => { R(893, y - 32, 976, y + 30, 'none', 0, '#303030', 3); R(1136, y - 32, 1216, y + 30, 'none', 0, '#303030', 3); R(894, y - 11, e, y + 11, '#58c5db'); P(`M894 ${y}H${e}`, 'none', '#377d8b', 2); R(e - 3, y - 11, e, y + 11, '#c59d38'); });
  for (let i = 0; i < 8; i++) T(888 + i * 40, 907 + i * 40, 348, String(80 - i * 10), 19, '#888');
  T(1211, 1220, 348, '0', 19, '#888');
  T(1234, 1293, 104, 'Att/Rel', S, '#999');
  [['5.00 ms', 133], ['100 ms', 159], ['10.0 ms', 207], ['200 ms', 233], ['50.0 ms', 279], ['300 ms', 306]].forEach(([s, y], i) => T(1231, i % 2 ? 1287 : 1292, y, s, S, CY));
  ['T', 'B', 'A'].forEach((s, i) => { R(1232 + i * 23, 326, 1249 + i * 23, 347, i ? '#1c4047' : CY, 0, CY, 2); T(1237 + i * 23, 1245 + i * 23, 343, s, 17, i ? CY : N); });
  /* Transport footer */
  R(24, 370, 2628, 422, '#666'); P('M24 384A18 18 0 0 1 24 414z', '#444'); P('M24 392L40 399L24 406z', '#aaa');
  R(60, 384, 1912, 417, '#8f8f8f', 3, '#484848', 4); R(1930, 384, 2266, 417, '#a3a3a3', 3, '#484848', 4); R(1932, 386, 2088, 415, '#9db4c4');
  [[1932, 406], [1953, 400], [1974, 402], [2015, 405], [2037, 394], [2079, 402]].forEach(([x, y]) => P(`M${x} ${y}h10`, 'none', '#333', 3));
});
at(1220, 480, () => {
  swap(111, 64, 10); disk(138, 64, 10); T(2, 59, 100, 'Output', S); T(82, 140, 100, 'Output', S);
  [138, 212, 285].forEach(y => { K(30, y, 21, 0, { w: 4, z: 0 }); down(30, y - 31, 5, 7, N); T(-2, 58, y + 34, '0.00 dB', S); });
  P('M71 84V355', 'none', '#666', 2);
  K(111, 136, 21, 0, { w: 4, z: 0 }); down(111, 105, 5, 7, N); T(81, 140, 172, '0.00 dB', S); T(93, 131, 195, 'Time', S); K(111, 230, 21, 0, { w: 4, z: 0 }); down(111, 199, 5, 7, N); T(88, 134, 267, '100 %', S);
  T(80, 143, 291, 'Amount', S); K(111, 317, 21, 148, k2); T(88, 134, 351, '100 %', S);
  meter(158); meter(979); meter(1188);
  R(172, 50, 974, 361, '#898989', 8); R(172, 50, 974, 78, '#a9a9a9', 8);
  C(188, 64, 10, OR, '#765321', 2); C(215, 64, 10, '#aaa', N, 2); P('M209 68h12l-6 -10z', N); T(232, 300, 70, 'EQ Eight', 21, N, 600); swap(932, 64, 10); disk(959, 64, 10);
  R(174, 78, 255, 359, '#808080');
  T(181, 244, 145, 'Analyze', S); T(181, 223, 175, 'Block', S); R(181, 181, 250, 199, '#ddd', 0, BD, 2); T(184, 222, 196, '8192', 19); down(240, 186, 6, 9);
  T(181, 243, 226, 'Refresh', S); R(181, 233, 248, 251, '#ddd', 0, BD, 2); R(182, 234, 195, 250, '#53cde5'); T(198, 238, 248, '60.00', 19); T(181, 210, 279, 'Avg', S); R(181, 286, 248, 303, '#ddd', 0, BD, 2); T(199, 233, 301, '1.00', 19);
  const f = ['53.1 Hz', '431 Hz', '1000 Hz', '2.33 kHz', '100.0 Hz', '10.0 kHz', '5.00 kHz', '18.0 kHz'], fa = [-100, 0, 30, 65, -60, 120, 92, 145], ga = [0, 22, 0, 24, 0, 0, 0, 0];
  f.forEach((s, i) => {
    const x = 297 + i * 78.2, on = i < 4, dk = on ? N : '#666';
    R(x - 36, 78, x + 37, 359, i ? '#878787' : '#9b9b9b', 0, '#737373', 2);
    T(x - 19, x + 19, 97, 'Freq', S); K(x, 121, 21, fa[i], { w: 4, blue: on ? '#5cc9df' : '#d0d0d0', dark: dk }); T(x - (s.length > 7 ? 34 : 30), x + (s.length > 7 ? 34 : 30), 156, s, S);
    T(x - 18, x + 18, 178, 'Gain', S); K(x, 214, 21, ga[i], { w: 4, z: 0, dark: i === 0 ? '#555' : dk }); down(x, 183, 5, 8, ga[i] ? '#53cde5' : dk);
    T(x - 30, x + 30, 250, ['0.00 dB', '2.14 dB', '0.00 dB', '2.72 dB'][i] || '0.00 dB', S); T(x - 5, x + 5, 272, 'Q', 19);
    R(x - 30, 279, x + 28, 298, on ? '#ddd' : '#868686', 0, '#555', 3); if (on) R(x - 28, 281, x - (i ? 6 : -6), 296, '#53cde5'); T(x - 16, x + 16, 295, i ? '0.71' : '2.21', 19);
    R(x - 30, 310, x + 28, 329, on ? '#ddd' : '#868686', 0, '#555', 3); down(x + 20, 315, 5, 9);
    if (i === 0) P(`M${x - 26} 325q2 -8 12 -8h17`, 'none', N, 3);
    else if (i === 7) P(`M${x - 26} 317h18q10 0 12 8`, 'none', N, 3);
    else if (i === 3) P(`M${x - 25} 320h16M${x + 8} 314h-9q-8 0 -8 6t8 6h9`, 'none', N, 2.5);
    else { C(x - 8, 320, 6, 'none', N, 2); P(`M${x - 25} 320h10M${x - 1} 320h9`, 'none', N, 3); }
    R(x - 19, 337, x - 2, 353, on ? '#53cde5' : '#aaa', 0, '#555', 2); T(x + 9, x + 18, 351, String(i + 1), 19);
  });
  R(888, 78, 972, 359, '#858585');
  btn(890, 89, 924, 108, '#aaa', 'Ω', 900, 914, 18); btn(931, 89, 965, 108, '#fca90f', '', 0, 0, S); P('M937 104v-5h5v-5h5v7h5v-6h4v9', 'none', N, 2);
  T(890, 935, 129, 'Mode', S); R(890, 136, 965, 154, '#ddd'); T(893, 943, 151, 'Stereo', 19); down(956, 141, 6, 9); T(890, 921, 176, 'Edit', S); btn(890, 182, 965, 200, '#999', 'A', 923, 932, 19, '#555');
  T(890, 960, 224, 'Adapt. Q', S); btn(890, 231, 965, 249, '#fca90f', 'On', 916, 939, S); T(890, 933, 273, 'Scale', S); btn(890, 280, 965, 298, '#53cde5', '100 %', 906, 948, 19); T(890, 926, 322, 'Gain', S); R(890, 329, 965, 347, '#ddd', 0, BD, 2); R(891, 330, 928, 346, '#53cde5'); T(897, 956, 345, '0.00 dB', 19);
  R(993, 50, 1183, 361, '#898989', 8); R(993, 50, 1183, 78, '#a9a9a9', 8); C(1009, 64, 10, OR, '#765321', 2); T(1026, 1083, 70, 'Limiter', 21, N, 600); swap(1142, 64, 10); disk(1167, 64, 10);
  T(1028, 1063, 103, 'Gain', S); K(1045, 138, 21, 18, { w: 4, z: 0 }); down(1045, 108, 5, 8, CY); T(1015, 1075, 176, '3.40 dB', S);
  T(1095, 1151, 103, 'Ceiling', S); R(1095, 109, 1171, 128, '#ddd', 0, BD, 2); T(1098, 1168, 125, '-0.30 dB', 19); btn(1095, 137, 1171, 157, '#fca90f', 'Stereo', 1107, 1160, S);
  T(1005, 1091, 201, 'Lookahead', S); R(1005, 207, 1090, 226, '#ddd', 0, BD, 2); T(1009, 1042, 223, '3 ms', 19); down(1081, 212, 6, 9);
  T(1014, 1076, 263, 'Release', S); K(1045, 287, 21, 100, { w: 4, dark: '#666', blue: '#ccc' }); T(1017, 1073, 322, '300 ms', S); btn(1005, 331, 1084, 350, '#fca90f', 'Auto', 1024, 1062, S);
  R(1124, 178, 1138, 346, '#202020');
  ['0', '-6', '-12', '-18', '-24', '-30', '-36', '-42'].forEach((s, i) => T(1156 - s.length * 5, 1156 + s.length * 4.5, 186 + i * 23.3, s, 19));
  R(1203, 50, 1296, 361, '#858585', 3); T(1241, 1294, 199, 'Drop A', S); T(1233, 1293, 225, 'Effects', S);
  P('M962 370H1255V410Q1255 418 1247 418H970Q962 418 962 410z', '#484848');
  T(969, 1026, 407, 'Master', 21, '#0c0c0c', 700);
  R(1032, 384, 1245, 416, '#181818', 0, '#080808', 4); P('M1040 390h190', 'none', '#b99664', 3, .6);
  R(1078, 388, 1108, 413, '#77817b'); R(1158, 388, 1234, 413, '#8c9693');
  for (let i = 0; i < 12; i++) P(`M${1162 + i * 6} 390v21`, 'none', '#606866', 2);
  P('M1086 390v22M1100 390v22', 'none', '#d2ad76', 3);
  C(1284, 399, 15, '#484848'); P('M1275 407L1284 389L1293 407z', '#999');
});
document.getElementById('session').innerHTML = out;
```
